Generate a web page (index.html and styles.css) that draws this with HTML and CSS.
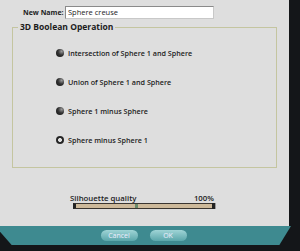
FILE: index.html
```html
<!DOCTYPE html>
<html>
	<head>
		<meta charset="UTF-8">
		<title>Boolean</title>
		<link rel="stylesheet" href="styles.css">
	</head>
	<body>
		<div class="screen">
			<div class="panel">
				<div class="name_row">
					<label class="name_label">New Name:</label>
					<div class="name_input">Sphere creuse</div>
				</div>
				<fieldset class="group">
					<legend>3D Boolean Operation</legend>
					<div class="opts">
						<div class="opt"><span class="radio"></span>Intersection of Sphere 1 and Sphere</div>
						<div class="opt"><span class="radio"></span>Union of Sphere 1 and Sphere</div>
						<div class="opt"><span class="radio"></span>Sphere 1 minus Sphere</div>
						<div class="opt"><span class="radio on"></span>Sphere minus Sphere 1</div>
					</div>
				</fieldset>
				<div class="quality">
					<div class="q_head"><span>Silhouette quality</span><span>100%</span></div>
					<div class="track"><span class="thumb"></span><span class="knob"></span></div>
				</div>
			</div>
			<div class="bar">
				<button class="btn">Cancel</button>
				<button class="btn">OK</button>
			</div>
		</div>
	</body>
</html>
```
FILE: styles.css
```css
*{
	margin: 0;
	padding: 0;
	box-sizing: border-box;
}
body{
	background: #0c0d0f;
	font-family: "Open Sans", "DejaVu Sans", sans-serif;
	font-size: 7.2px;
	color: #1c1c1c;
}
.screen{
	width: 300px;
	height: 251px;
	background: #141619;
	overflow: hidden;
}
.panel{
	width: 289px;
	height: 226px;
	background: #dedede;
	padding-top: 6px;
}
.name_row{
	display: flex;
	align-items: center;
	height: 13px;
	padding-left: 23px;
	white-space: nowrap;
}
.name_label{
	font-weight: bold;
	font-size: 7px;
	width: 42px;
}
.name_input{
	width: 149px;
	height: 13px;
	background: #fff;
	border: 1px solid #8a8a8a;
	border-right-color: #c8c8c8;
	border-bottom-color: #c8c8c8;
	padding-left: 2px;
	line-height: 11px;
	font-size: 7.5px;
}
.group{
	margin: 3px 0 0 12px;
	width: 265px;
	height: 146px;
	border: 1px solid #c4c5a0;
	padding: 0 0 0 5px;
}
.group legend{
	font-weight: bold;
	font-size: 8.5px;
	padding: 0 2px;
	line-height: 10px;
}
.opts{
	padding: 6px 0 0 38px;
}
.opt{
	display: flex;
	align-items: center;
	height: 29px;
	font-weight: 600;
}
.radio{
	width: 8px;
	height: 8px;
	border-radius: 50%;
	margin-right: 4px;
	background: radial-gradient(circle at 70% 30%, #9a9a9a 0, #333 45%, #111 100%);
}
.radio.on{
	background: radial-gradient(circle, #dedede 0, #dedede 30%, #222 40%, #333 100%);
}
.quality{
	margin: 25px 0 0 70px;
	width: 146px;
}
.q_head{
	display: flex;
	justify-content: space-between;
	font-weight: 600;
	font-size: 7.8px;
	line-height: 10px;
	padding-right: 2px;
}
.track{
	display: flex;
	justify-content: space-between;
	align-items: center;
	margin-left: 3px;
	height: 6px;
	background: #cdb99a;
	border-top: 1px solid #3a3530;
	border-bottom: 1px solid #3a3530;
	border-left: 3px solid #222;
}
.thumb{
	width: 3px;
	height: 4px;
	margin-left: 59px;
	background: #6a8a6a;
}
.knob{
	width: 4px;
	height: 6px;
	background: #222;
	border-right: 1px solid #999;
}
.bar{
	width: 291px;
	height: 19px;
	background: #3e8a90;
	display: flex;
	justify-content: center;
	align-items: center;
	gap: 12px;
	padding-right: 4px;
	clip-path: polygon(0 0, 100% 0, 96% 100%, 4% 100%, 0 30%);
}
.btn{
	width: 37px;
	height: 11px;
	border: none;
	border-radius: 6px;
	background: linear-gradient(#9fd4d6, #5aa6aa);
	color: #eef;
	font-family: inherit;
	font-size: 7px;
	line-height: 11px;
}
```
